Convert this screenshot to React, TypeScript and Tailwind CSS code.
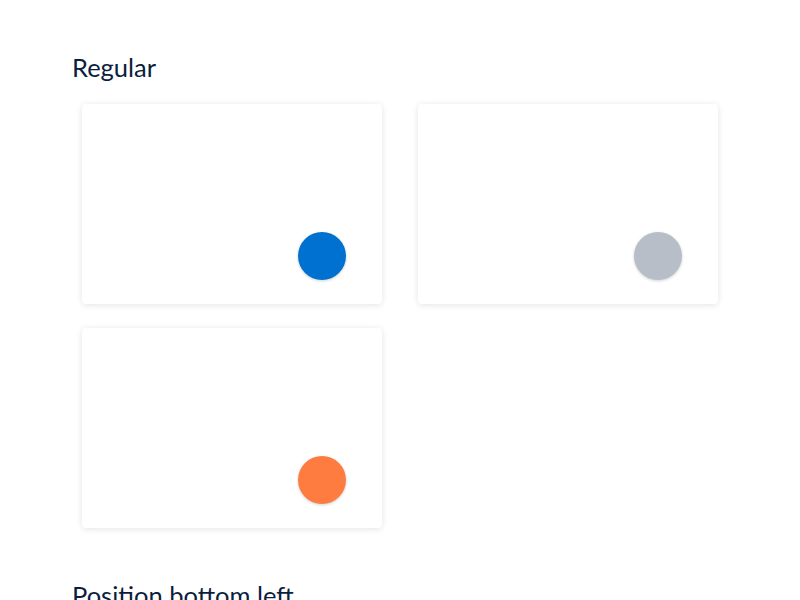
const cards = [
  { color: 'bg-[#0071d1]' },
  { color: 'bg-[#b8bec8]' },
  { color: 'bg-[#ff7c41]' },
];

function Card({ color }: { color: string }) {
  return (
    <div className="relative h-[200px] w-[300px] rounded bg-white shadow-[0_1px_6px_rgba(15,23,42,0.12)]">
      <div className={`absolute right-9 bottom-6 h-12 w-12 rounded-full ${color} shadow-[0_1px_3px_rgba(15,23,42,0.2)]`} />
    </div>
  );
}

export default function App() {
  return (
    <div className="min-h-screen bg-white px-[72px] pt-[50px] font-['Lato','Open_Sans',sans-serif] text-[#0b1e3d]">
      <h2 className="text-[25.5px] leading-[34px]">Regular</h2>
      <div className="mt-5 ml-[10px] grid grid-cols-[300px_300px] gap-x-9 gap-y-6">
        {cards.map((c, i) => (
          <Card key={i} color={c.color} />
        ))}
      </div>
      <h2 className="mt-[50px] text-[25.5px] leading-[34px]">Position bottom left</h2>
    </div>
  );
}
